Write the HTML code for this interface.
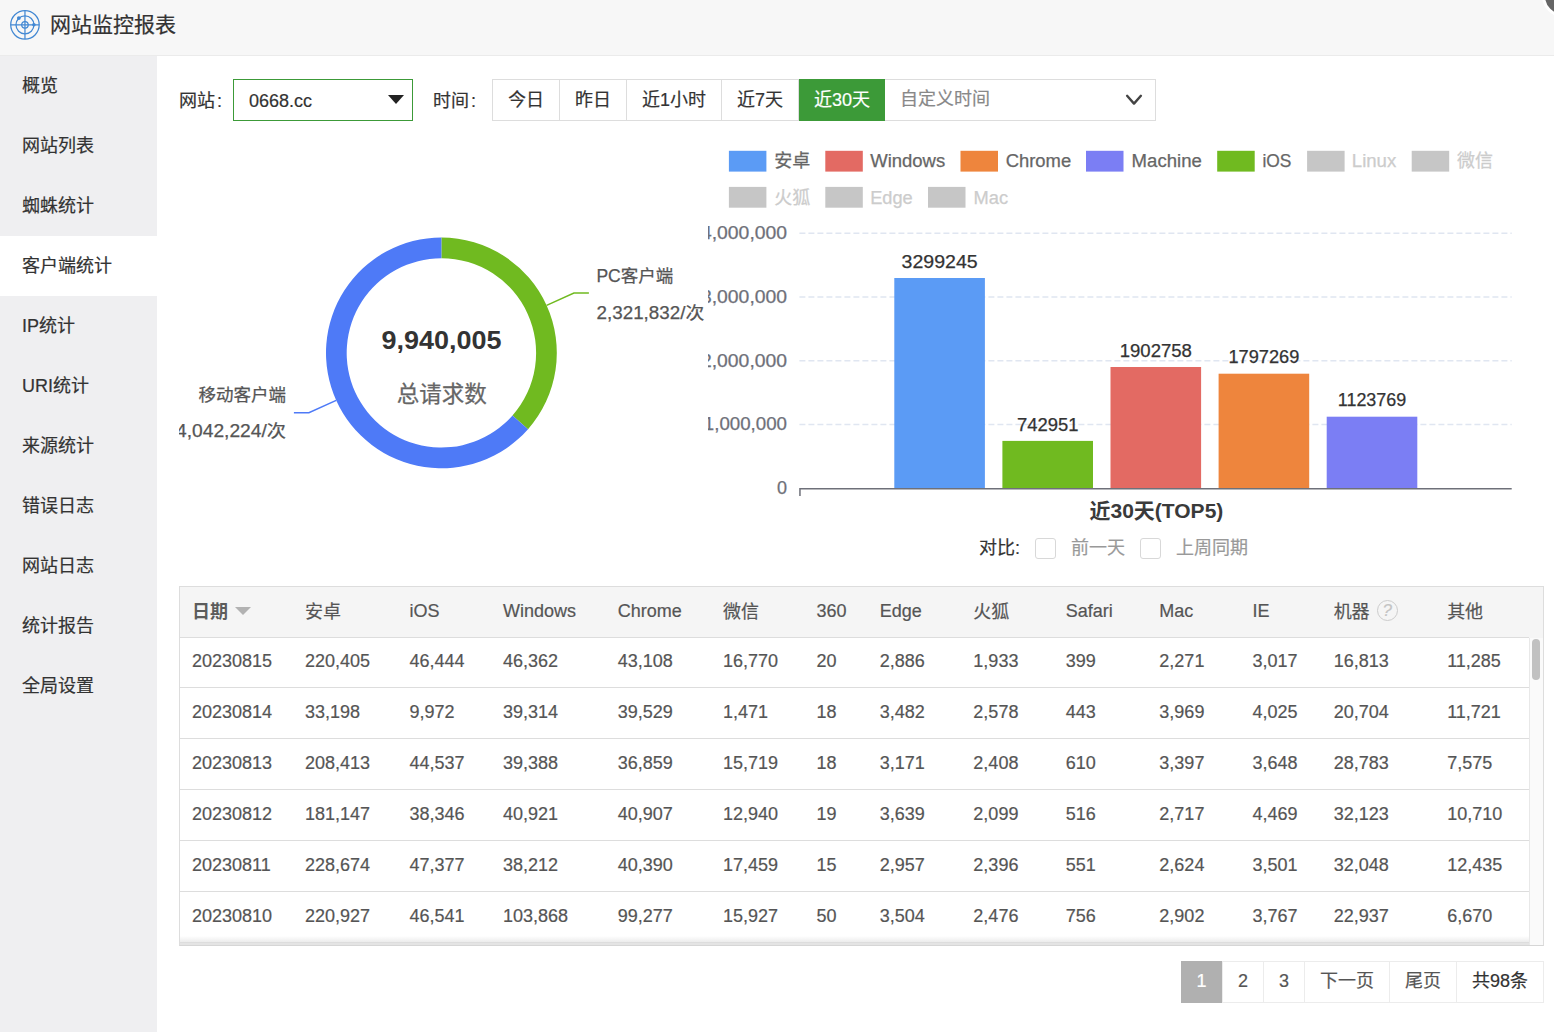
<!DOCTYPE html>
<html lang="zh-CN">
<head>
<meta charset="utf-8">
<title>网站监控报表</title>
<style>
*{box-sizing:border-box;margin:0;padding:0}
html,body{width:1554px;height:1032px;overflow:hidden;background:#fff}
body{position:relative;font-family:"Liberation Sans","Noto Sans CJK SC",sans-serif;font-size:18px;color:#333;-webkit-text-stroke:0.2px}
.abs{position:absolute}
/* header */
#hd{position:absolute;left:0;top:0;width:1554px;height:56px;background:#f7f7f7;border-bottom:1px solid #ebebeb;overflow:hidden}
#hd .ttl{position:absolute;left:50px;top:0;height:49px;line-height:49px;font-size:21px;color:#333;white-space:nowrap}
#hd svg.ico{position:absolute;left:8px;top:8px}
#hd .cls{position:absolute;left:1542px;top:-25.5px;width:42px;height:42px;border-radius:50%;background:#666;border:3.5px solid #fff}
/* sidebar */
#sb{position:absolute;left:0;top:56px;width:157px;height:976px;background:#efeff1}
#sb p{height:60px;line-height:61px;padding-left:22px;font-size:18px;color:#333;white-space:nowrap}
#sb p.on{background:#fff}
/* filter */
.lbl{position:absolute;font-size:18px;color:#333;white-space:nowrap;line-height:42px;height:42px}
#sel{position:absolute;left:233px;top:79px;width:180px;height:42px;border:1px solid #3c9a38;background:#fff}
#sel span{position:absolute;left:15px;top:0;line-height:42px;font-size:18px;color:#333}
#sel i{position:absolute;left:153.5px;top:14.5px;width:0;height:0;border-left:8.5px solid transparent;border-right:8.5px solid transparent;border-top:9px solid #222}
#grp{position:absolute;left:492px;top:79px;width:664px;height:42px;border:1px solid #ddd;background:#fff;display:flex}
#grp b{font-weight:normal;display:block;height:40px;line-height:40px;padding:0 15px;border-right:1px solid #ddd;font-size:18px;color:#333;white-space:nowrap}
#grp b.on{background:#3c9a38;color:#fff;border-right:0;margin:-1px 0;height:42px;line-height:42px}
#grp .cus{flex:1;position:relative;line-height:39px;padding-left:15px;color:#888;font-size:18px}
#grp .cus svg{position:absolute;right:12px;top:12.8px}
/* table */
#tb{position:absolute;left:179px;top:586px;width:1365px;height:360px;border:1px solid #ddd;border-bottom-color:#d6d6d6;background:#e4e4e4;overflow:hidden}
#tb .fade{position:absolute;left:0;top:349px;width:1349px;height:6px;background:linear-gradient(rgba(238,238,238,0),rgba(236,236,236,1))}
#tb table{border-collapse:collapse;table-layout:fixed;width:1349px;position:absolute;left:0;top:0}
#tb th,#tb td{text-align:left;padding:0 0 2px 12px;font-size:18px;line-height:24px;vertical-align:middle;white-space:nowrap;overflow:hidden}
#tb th{height:50px;background:#f5f5f5;color:#555;font-weight:normal;border-bottom:1px solid #ddd}
#tb td{height:51px;background:#fff;color:#555;border-bottom:1px solid #ddd}
#tb tr.r1 td{height:50px}
#tb th.d{font-weight:bold;-webkit-text-stroke:0;color:#5c5c5c}
#tb th.c{padding-bottom:0}
#tb .tri{display:inline-block;width:0;height:0;border-left:8px solid transparent;border-right:8px solid transparent;border-top:8.5px solid #b2b2b2;margin-left:7px;vertical-align:3px}
#tb .q{display:inline-block;width:21px;height:21px;border:1px solid #ccc;border-radius:50%;color:#c4c4c4;font-size:17px;line-height:19px;text-align:center;margin-left:7px;vertical-align:2px}
#tb .hdx{position:absolute;left:1349px;top:0;width:15px;height:51px;background:#f5f5f5}
#tb .trk{position:absolute;left:1349px;top:51px;width:15px;height:310px;background:#fafafa;border-left:1px solid #e8e8e8}
#tb .thm{position:absolute;left:1352.2px;top:52.2px;width:8px;height:40.5px;border-radius:4px;background:#c1c1c1}
/* pager */
#pg{position:absolute;left:1181px;top:961px;height:42px;display:flex;border:1px solid #ececec;border-left:0}
#pg span{display:block;height:40px;line-height:38px;padding:0 15px;border-left:1px solid #ececec;font-size:18px;color:#555;white-space:nowrap;background:#fff}
#pg span.on{background:#b0b0b0;color:#fff;border-left:0;margin:-1px 0;height:42px;line-height:40px;padding:0 15.5px}
#pg span.t{color:#333}
/* compare */
.ck{position:absolute;width:21px;height:21px;border:1px solid #d8d8d8;border-radius:3px;background:#fff}
svg text{font-family:"Liberation Sans","Noto Sans CJK SC",sans-serif}
</style>
</head>
<body>
<div id="hd">
  <svg class="ico" width="34" height="34" viewBox="0 0 34 34" fill="none" stroke="#4288d3" stroke-width="1.25">
    <circle cx="16.96" cy="16.86" r="14.25"/>
    <circle cx="16.96" cy="16.86" r="9"/>
    <circle cx="16.96" cy="16.86" r="3.25"/>
    <path d="M16.96 2.6V31.1M2.7 16.86H31.2"/>
    <circle cx="10.86" cy="10.04" r="1.9" fill="#4288d3" stroke="none"/>
    <circle cx="25.9" cy="16.8" r="1.8" fill="#4288d3" stroke="none"/>
  </svg>
  <div class="ttl">网站监控报表</div>
  <div class="cls"></div>
</div>
<div id="sb">
  <p>概览</p><p>网站列表</p><p>蜘蛛统计</p><p class="on">客户端统计</p><p>IP统计</p><p>URI统计</p><p>来源统计</p><p>错误日志</p><p>网站日志</p><p>统计报告</p><p>全局设置</p>
</div>

<div class="lbl" style="left:179px;top:80px">网站<span style="margin-left:2px">:</span></div>
<div id="sel"><span>0668.cc</span><i></i></div>
<div class="lbl" style="left:433px;top:80px">时间<span style="margin-left:2px">:</span></div>
<div id="grp"><b>今日</b><b>昨日</b><b>近1小时</b><b>近7天</b><b class="on">近30天</b><div class="cus">自定义时间<svg width="18" height="14" viewBox="0 0 18 14" fill="none" stroke="#444" stroke-width="2.4" stroke-linecap="round" stroke-linejoin="round"><path d="M2.1 2.8L9 10.6L15.9 2.8"/></svg></div></div>

<!--CH0--><svg class="abs" style="left:708px;top:130px" width="846" height="440" viewBox="708 130 846 440">
<rect x="728.9" y="150.8" width="37.5" height="20.8" fill="#5b9bf5"/>
<text x="774.2" y="167.4" font-size="18" fill="#666" stroke="#666" stroke-width="0.25">安卓</text>
<rect x="825.3" y="150.8" width="37.5" height="20.8" fill="#e36a63"/>
<text x="870.2" y="167.4" font-size="18" fill="#666" stroke="#666" stroke-width="0.25" textLength="75.0" lengthAdjust="spacingAndGlyphs">Windows</text>
<rect x="960.5" y="150.8" width="37.5" height="20.8" fill="#ee853d"/>
<text x="1005.7" y="167.4" font-size="18" fill="#666" stroke="#666" stroke-width="0.25" textLength="65.5" lengthAdjust="spacingAndGlyphs">Chrome</text>
<rect x="1086.0" y="150.8" width="37.5" height="20.8" fill="#7b7ef4"/>
<text x="1131.6" y="167.4" font-size="18" fill="#666" stroke="#666" stroke-width="0.25" textLength="70.2" lengthAdjust="spacingAndGlyphs">Machine</text>
<rect x="1217.2" y="150.8" width="37.5" height="20.8" fill="#70ba20"/>
<text x="1262.4" y="167.4" font-size="18" fill="#666" stroke="#666" stroke-width="0.25" textLength="29.0" lengthAdjust="spacingAndGlyphs">iOS</text>
<rect x="1307.1" y="150.8" width="37.5" height="20.8" fill="#c6c6c6"/>
<text x="1351.8" y="167.4" font-size="18" fill="#ccc" stroke="#ccc" stroke-width="0.25" textLength="44.4" lengthAdjust="spacingAndGlyphs">Linux</text>
<rect x="1411.7" y="150.8" width="37.5" height="20.8" fill="#c6c6c6"/>
<text x="1457.0" y="167.4" font-size="18" fill="#ccc" stroke="#ccc" stroke-width="0.25">微信</text>
<rect x="728.9" y="186.9" width="37.5" height="20.8" fill="#c6c6c6"/>
<text x="774.2" y="203.5" font-size="18" fill="#ccc" stroke="#ccc" stroke-width="0.25">火狐</text>
<rect x="825.3" y="186.9" width="37.5" height="20.8" fill="#c6c6c6"/>
<text x="870.2" y="203.5" font-size="18" fill="#ccc" stroke="#ccc" stroke-width="0.25" textLength="42.5" lengthAdjust="spacingAndGlyphs">Edge</text>
<rect x="928.0" y="186.9" width="37.5" height="20.8" fill="#c6c6c6"/>
<text x="973.6" y="203.5" font-size="18" fill="#ccc" stroke="#ccc" stroke-width="0.25" textLength="34.5" lengthAdjust="spacingAndGlyphs">Mac</text>
<line x1="799.4" x2="1511.7" y1="424.55" y2="424.55" stroke="#e0e6f1" stroke-width="1.5" stroke-dasharray="6 3"/>
<line x1="799.4" x2="1511.7" y1="360.80" y2="360.80" stroke="#e0e6f1" stroke-width="1.5" stroke-dasharray="6 3"/>
<line x1="799.4" x2="1511.7" y1="297.05" y2="297.05" stroke="#e0e6f1" stroke-width="1.5" stroke-dasharray="6 3"/>
<line x1="799.4" x2="1511.7" y1="233.30" y2="233.30" stroke="#e0e6f1" stroke-width="1.5" stroke-dasharray="6 3"/>
<text x="787" y="494.0" font-size="18" fill="#6e7079" stroke="#6e7079" stroke-width="0.25" text-anchor="end">0</text>
<text x="787" y="430.2" font-size="18" fill="#6e7079" stroke="#6e7079" stroke-width="0.25" text-anchor="end" textLength="83.2" lengthAdjust="spacingAndGlyphs">1,000,000</text>
<text x="787" y="366.5" font-size="18" fill="#6e7079" stroke="#6e7079" stroke-width="0.25" text-anchor="end" textLength="86" lengthAdjust="spacingAndGlyphs">2,000,000</text>
<text x="787" y="302.8" font-size="18" fill="#6e7079" stroke="#6e7079" stroke-width="0.25" text-anchor="end" textLength="86" lengthAdjust="spacingAndGlyphs">3,000,000</text>
<text x="787" y="239.0" font-size="18" fill="#6e7079" stroke="#6e7079" stroke-width="0.25" text-anchor="end" textLength="86" lengthAdjust="spacingAndGlyphs">4,000,000</text>
<rect x="894.3" y="278.0" width="90.6" height="210.3" fill="#5b9bf5"/>
<text x="939.6" y="267.7" font-size="18" fill="#333" stroke="#333" stroke-width="0.25" text-anchor="middle" textLength="76.0" lengthAdjust="spacingAndGlyphs">3299245</text>
<rect x="1002.4" y="440.9" width="90.6" height="47.4" fill="#70ba20"/>
<text x="1047.7" y="430.6" font-size="18" fill="#333" stroke="#333" stroke-width="0.25" text-anchor="middle" textLength="61.5" lengthAdjust="spacingAndGlyphs">742951</text>
<rect x="1110.5" y="367.0" width="90.6" height="121.3" fill="#e36a63"/>
<text x="1155.8" y="356.7" font-size="18" fill="#333" stroke="#333" stroke-width="0.25" text-anchor="middle" textLength="72.2" lengthAdjust="spacingAndGlyphs">1902758</text>
<rect x="1218.6" y="373.7" width="90.6" height="114.6" fill="#ee853d"/>
<text x="1263.9" y="363.4" font-size="18" fill="#333" stroke="#333" stroke-width="0.25" text-anchor="middle" textLength="70.8" lengthAdjust="spacingAndGlyphs">1797269</text>
<rect x="1326.7" y="416.7" width="90.6" height="71.6" fill="#7b7ef4"/>
<text x="1372.0" y="406.4" font-size="18" fill="#333" stroke="#333" stroke-width="0.25" text-anchor="middle" textLength="68.4" lengthAdjust="spacingAndGlyphs">1123769</text>
<path d="M799.20 488.75H1511.7 M799.95 488.75v7.2" stroke="#6e7079" stroke-width="1.5" fill="none"/>
<text x="1156.4" y="518" font-size="21" font-weight="bold" fill="#3a3a3a" text-anchor="middle">近30天(TOP5)</text>
</svg>
<svg class="abs" style="left:179px;top:130px" width="529" height="440" viewBox="179 130 529 440">
<path d="M441.40 237.50A115.4 115.4 0 0 1 528.04 429.13L512.50 415.45A94.7 94.7 0 0 0 441.40 258.20Z" fill="#70ba20"/>
<path d="M528.04 429.13A115.4 115.4 0 1 1 441.40 237.50L441.40 258.20A94.7 94.7 0 1 0 512.50 415.45Z" fill="#4e7af7"/>
<path d="M546.6 305.4L573.9 293.0H588.9" stroke="#70ba20" stroke-width="1.5" fill="none"/>
<text x="596.4" y="282.3" font-size="17.5" fill="#555" stroke="#555" stroke-width="0.25">PC客户端</text>
<text x="596.6" y="318.5" font-size="17.5" fill="#555" stroke="#555" stroke-width="0.25" textLength="107.6" lengthAdjust="spacingAndGlyphs">2,321,832/次</text>
<path d="M336.2 400.4L308.9 412.8H293.9" stroke="#4e7af7" stroke-width="1.5" fill="none"/>
<text x="286" y="401.3" font-size="17.5" fill="#555" stroke="#555" stroke-width="0.25" text-anchor="end">移动客户端</text>
<text x="286" y="437.4" font-size="17.5" fill="#555" stroke="#555" stroke-width="0.25" text-anchor="end" textLength="110" lengthAdjust="spacingAndGlyphs">4,042,224/次</text>
<text x="441.5" y="348.5" font-size="25" font-weight="bold" fill="#333" text-anchor="middle" textLength="120" lengthAdjust="spacingAndGlyphs">9,940,005</text>
<text x="441.8" y="402.4" font-size="22.5" fill="#666" stroke="#666" stroke-width="0.25" text-anchor="middle">总请求数</text>
</svg><!--CH1-->

<div class="lbl" style="left:979px;top:527px">对比:</div>
<div class="ck" style="left:1035px;top:538px"></div>
<div class="lbl" style="left:1071px;top:527px;color:#999">前一天</div>
<div class="ck" style="left:1140px;top:538px"></div>
<div class="lbl" style="left:1176px;top:527px;color:#999">上周同期</div>

<!--TB0--><div id="tb"><table><colgroup>
<col style="width:113px">
<col style="width:104.5px">
<col style="width:93.5px">
<col style="width:114.7px">
<col style="width:105.3px">
<col style="width:93.4px">
<col style="width:63.3px">
<col style="width:93.7px">
<col style="width:92.3px">
<col style="width:93.7px">
<col style="width:93.2px">
<col style="width:81.1px">
<col style="width:113.5px">
<col>
</colgroup><thead><tr>
<th class="d c">日期<i class="tri"></i></th>
<th class="c">安卓</th>
<th>iOS</th>
<th>Windows</th>
<th>Chrome</th>
<th class="c">微信</th>
<th>360</th>
<th>Edge</th>
<th class="c">火狐</th>
<th>Safari</th>
<th>Mac</th>
<th>IE</th>
<th class="c">机器<i class="q">?</i></th>
<th class="c">其他</th>
</tr></thead><tbody>
<tr class="r1"><td>20230815</td><td>220,405</td><td>46,444</td><td>46,362</td><td>43,108</td><td>16,770</td><td>20</td><td>2,886</td><td>1,933</td><td>399</td><td>2,271</td><td>3,017</td><td>16,813</td><td>11,285</td></tr>
<tr><td>20230814</td><td>33,198</td><td>9,972</td><td>39,314</td><td>39,529</td><td>1,471</td><td>18</td><td>3,482</td><td>2,578</td><td>443</td><td>3,969</td><td>4,025</td><td>20,704</td><td>11,721</td></tr>
<tr><td>20230813</td><td>208,413</td><td>44,537</td><td>39,388</td><td>36,859</td><td>15,719</td><td>18</td><td>3,171</td><td>2,408</td><td>610</td><td>3,397</td><td>3,648</td><td>28,783</td><td>7,575</td></tr>
<tr><td>20230812</td><td>181,147</td><td>38,346</td><td>40,921</td><td>40,907</td><td>12,940</td><td>19</td><td>3,639</td><td>2,099</td><td>516</td><td>2,717</td><td>4,469</td><td>32,123</td><td>10,710</td></tr>
<tr><td>20230811</td><td>228,674</td><td>47,377</td><td>38,212</td><td>40,390</td><td>17,459</td><td>15</td><td>2,957</td><td>2,396</td><td>551</td><td>2,624</td><td>3,501</td><td>32,048</td><td>12,435</td></tr>
<tr><td>20230810</td><td>220,927</td><td>46,541</td><td>103,868</td><td>99,277</td><td>15,927</td><td>50</td><td>3,504</td><td>2,476</td><td>756</td><td>2,902</td><td>3,767</td><td>22,937</td><td>6,670</td></tr>
</tbody></table><div class="fade"></div><div class="hdx"></div><div class="trk"></div><div class="thm"></div></div><!--TB1-->

<div id="pg"><span class="on">1</span><span>2</span><span>3</span><span>下一页</span><span>尾页</span><span class="t">共98条</span></div>
</body>
</html>
